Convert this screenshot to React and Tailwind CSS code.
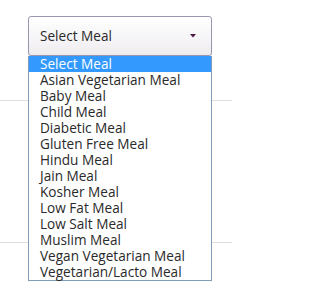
import React from "react";

const items = [
  "Select Meal",
  "Asian Vegetarian Meal",
  "Baby Meal",
  "Child Meal",
  "Diabetic Meal",
  "Gluten Free Meal",
  "Hindu Meal",
  "Jain Meal",
  "Kosher Meal",
  "Low Fat Meal",
  "Low Salt Meal",
  "Muslim Meal",
  "Vegan Vegetarian Meal",
  "Vegetarian/Lacto Meal",
];

export default function App() {
  return (
    <div
      className="relative w-[232px] h-[299px] bg-white overflow-hidden text-[#2b2b2b]"
      style={{ fontFamily: "'Open Sans', Lato, sans-serif" }}
    >
      <div className="absolute left-0 right-0 top-[100px] h-px bg-[#dedede]" />
      <div className="absolute left-0 right-0 top-[242px] h-px bg-[#dedede]" />
      <div className="relative ml-[28px] mt-[16px] w-[184px]">
        <div className="flex h-[40px] items-center justify-between rounded-[3px] border border-[#9a96b0] bg-gradient-to-b from-white to-[#efecf0] pl-[11px] pr-[15px] text-[13.6px] text-[#2a2a2a] shadow-[0_1px_1px_rgba(0,0,0,0.08)]">
          <span>Select Meal</span>
          <svg width="6" height="4" viewBox="0 0 6 4">
            <path d="M0 0 L6 0 L3 3.5 Z" fill="#4a1b47" />
          </svg>
        </div>
        <div className="border border-t-0 border-[#7f9db9] bg-white">
          {items.map((t, i) => (
            <div
              key={t}
              className={
                "h-[16px] pl-[11px] text-[13.6px] leading-[16px] " +
                (i === 0 ? "bg-[#3399ff] text-white" : "text-[#2a2a2a]")
              }
            >
              {t}
            </div>
          ))}
        </div>
      </div>
    </div>
  );
}
